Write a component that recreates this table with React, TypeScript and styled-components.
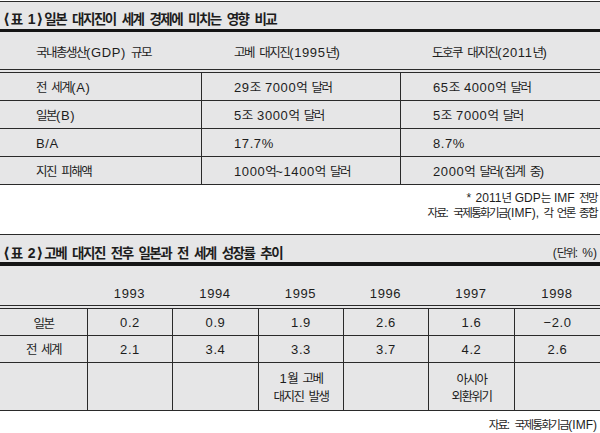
import React from 'react';
import styled, { createGlobalStyle } from 'styled-components';

const Global = createGlobalStyle`
  html, body { margin: 0; padding: 0; background: #ffffff; }
  body {
    width: 600px;
    height: 433px;
    overflow: hidden;
    color: #1d1d1d;
    font-family: "Liberation Sans", "Noto Sans CJK KR", sans-serif;
  }
`;

type Tone = 'title' | 'body' | 'note';

const SIZE: Record<Tone, [number, number]> = {
  title: [13.5, 14],
  body: [12.5, 13],
  note: [11.5, 12],
};
const SPACING: Record<Tone, [number, number]> = {
  title: [-1.5, 0],
  body: [-1.5, 0.6],
  note: [-1.6, 0],
};
const WORD: Record<Tone, number> = { title: 2, body: 1, note: 1 };

const HANGUL_SPLIT = /([\uAC00-\uD7A3\u3131-\u318E]+)/;
const HANGUL_TEST = /^[\uAC00-\uD7A3\u3131-\u318E]/;

const Run = styled.span<{ $tone: Tone; $hangul: boolean }>`
  font-family: ${(p) =>
    p.$hangul
      ? '"Noto Sans CJK KR", sans-serif'
      : '"Liberation Sans", "Noto Sans CJK KR", sans-serif'};
  font-size: ${(p) => SIZE[p.$tone][p.$hangul ? 0 : 1]}px;
  letter-spacing: ${(p) => SPACING[p.$tone][p.$hangul ? 0 : 1]}px;
  word-spacing: ${(p) => WORD[p.$tone]}px;
  font-weight: ${(p) => (p.$tone === 'title' ? 700 : 400)};
`;

const Bracket = styled.span`
  font-family: "DejaVu Sans", sans-serif;
  font-size: 15px;
  font-weight: 700;
  margin: 0 1px;
`;

function T({ tone, children }: { tone: Tone; children: string }) {
  const parts = children.split(HANGUL_SPLIT).filter((s) => s.length > 0);
  return (
    <>
      {parts.map((s, i) => (
        <Run key={i} $tone={tone} $hangul={HANGUL_TEST.test(s)}>
          {s}
        </Run>
      ))}
    </>
  );
}

const Page = styled.div`
  display: flex;
  flex-direction: column;
  width: 600px;
`;

const Panel = styled.section<{ $first?: boolean }>`
  background: #e6e6e7;
  border-top: 1px solid #2a2a2a;
  margin-top: ${(p) => (p.$first ? '1px' : '0')};
`;

const TitleBar = styled.div<{ $height: number; $bar: number; $pad: number }>`
  box-sizing: border-box;
  height: ${(p) => p.$height}px;
  display: flex;
  justify-content: space-between;
  align-items: flex-end;
  padding: 0 3px ${(p) => p.$pad}px 2px;
  line-height: 16px;
  border-bottom: ${(p) => p.$bar}px solid #151515;
  white-space: nowrap;
`;

const TitleText = styled.div`
  display: block;
`;

const HeaderRow = styled.div<{ $cols: string; $height: number; $pad: number }>`
  box-sizing: border-box;
  display: grid;
  grid-template-columns: ${(p) => p.$cols};
  height: ${(p) => p.$height}px;
  padding-bottom: ${(p) => p.$pad}px;
  align-items: end;
  border-bottom: 1px solid #2a2a2a;
  line-height: 16px;
  white-space: nowrap;
`;

const Body = styled.div`
  margin-top: 2px;
  border-top: 1px solid #2a2a2a;
`;

const Row = styled.div<{ $cols: string; $height: number }>`
  box-sizing: border-box;
  display: grid;
  grid-template-columns: ${(p) => p.$cols};
  height: ${(p) => p.$height}px;
  border-bottom: 1px solid #2a2a2a;
  line-height: 16px;
  white-space: nowrap;
`;

const Cell = styled.div<{ $pad?: number; $center?: boolean; $divider?: boolean }>`
  display: flex;
  flex-direction: column;
  justify-content: center;
  align-items: ${(p) => (p.$center ? 'center' : 'flex-start')};
  text-align: ${(p) => (p.$center ? 'center' : 'left')};
  padding-left: ${(p) => p.$pad ?? 0}px;
  border-left: ${(p) => (p.$divider ? '1px solid #2a2a2a' : 'none')};
  line-height: 17px;
`;

const HeadCell = styled.div<{ $pad?: number; $center?: boolean }>`
  text-align: ${(p) => (p.$center ? 'center' : 'left')};
  padding-left: ${(p) => p.$pad ?? 0}px;
`;

const Notes = styled.div<{ $top: number; $bottom: number }>`
  display: flex;
  flex-direction: column;
  align-items: flex-end;
  padding: ${(p) => p.$top}px 3px ${(p) => p.$bottom}px 0;
  line-height: 14px;
  white-space: nowrap;
`;

const COLS1 = '201px 199px 200px';
const COLS2 = '87px 85px 86px 85px 85px 86px 86px';

const table1 = [
  ['전 세계(A)', '29조 7000억 달러', '65조 4000억 달러'],
  ['일본(B)', '5조 3000억 달러', '5조 7000억 달러'],
  ['B/A', '17.7%', '8.7%'],
  ['지진 피해액', '1000억~1400억 달러', '2000억 달러(집계 중)'],
];

const years = ['1993', '1994', '1995', '1996', '1997', '1998'];
const table2 = [
  ['일본', '0.2', '0.9', '1.9', '2.6', '1.6', '−2.0'],
  ['전 세계', '2.1', '3.4', '3.3', '3.7', '4.2', '2.6'],
];
const events = ['', '', '1월 고베\n대지진 발생', '', '아시아\n외환위기', ''];

export default function App() {
  return (
    <>
      <Global />
      <Page>
        <Panel $first>
          <TitleBar $height={30} $bar={3} $pad={2}>
            <TitleText>
              <Bracket>⟨</Bracket>
              <T tone="title">표 1</T>
              <Bracket>⟩</Bracket>
              <T tone="title">일본 대지진이 세계 경제에 미치는 영향 비교</T>
            </TitleText>
          </TitleBar>
          <HeaderRow $cols={COLS1} $height={38} $pad={8}>
            <HeadCell $pad={36}>
              <T tone="body">국내총생산(GDP) 규모</T>
            </HeadCell>
            <HeadCell $pad={33}>
              <T tone="body">고베 대지진(1995년)</T>
            </HeadCell>
            <HeadCell $pad={32}>
              <T tone="body">도호쿠 대지진(2011년)</T>
            </HeadCell>
          </HeaderRow>
          <Body>
            {table1.map((r) => (
              <Row key={r[0]} $cols={COLS1} $height={28}>
                <Cell $pad={36}>
                  <span>
                    <T tone="body">{r[0]}</T>
                  </span>
                </Cell>
                <Cell $pad={32} $divider>
                  <span>
                    <T tone="body">{r[1]}</T>
                  </span>
                </Cell>
                <Cell $pad={32} $divider>
                  <span>
                    <T tone="body">{r[2]}</T>
                  </span>
                </Cell>
              </Row>
            ))}
          </Body>
        </Panel>
        <Notes $top={5} $bottom={14}>
          <div>
            <T tone="note">* 2011년 GDP는 IMF 전망</T>
          </div>
          <div>
            <T tone="note">자료: 국제통화기금(IMF), 각 언론 종합</T>
          </div>
        </Notes>
        <Panel>
          <TitleBar $height={31} $bar={4} $pad={1}>
            <TitleText>
              <Bracket>⟨</Bracket>
              <T tone="title">표 2</T>
              <Bracket>⟩</Bracket>
              <T tone="title">고베 대지진 전후 일본과 전 세계 성장률 추이</T>
            </TitleText>
            <div>
              <T tone="note">(단위: %)</T>
            </div>
          </TitleBar>
          <HeaderRow $cols={COLS2} $height={40} $pad={3}>
            <HeadCell />
            {years.map((y) => (
              <HeadCell key={y} $center>
                <T tone="body">{y}</T>
              </HeadCell>
            ))}
          </HeaderRow>
          <Body>
            {table2.map((r) => (
              <Row key={r[0]} $cols={COLS2} $height={27}>
                {r.map((v, i) => (
                  <Cell key={i} $center $divider={i > 0}>
                    <span>
                      <T tone="body">{v}</T>
                    </span>
                  </Cell>
                ))}
              </Row>
            ))}
            <Row $cols={COLS2} $height={48}>
              <Cell $center />
              {events.map((e, i) => (
                <Cell key={i} $center $divider>
                  {e.split('\n').filter(Boolean).map((line) => (
                    <span key={line}>
                      <T tone="body">{line}</T>
                    </span>
                  ))}
                </Cell>
              ))}
            </Row>
          </Body>
        </Panel>
        <Notes $top={6} $bottom={0}>
          <div>
            <T tone="note">자료: 국제통화기금(IMF)</T>
          </div>
        </Notes>
      </Page>
    </>
  );
}
